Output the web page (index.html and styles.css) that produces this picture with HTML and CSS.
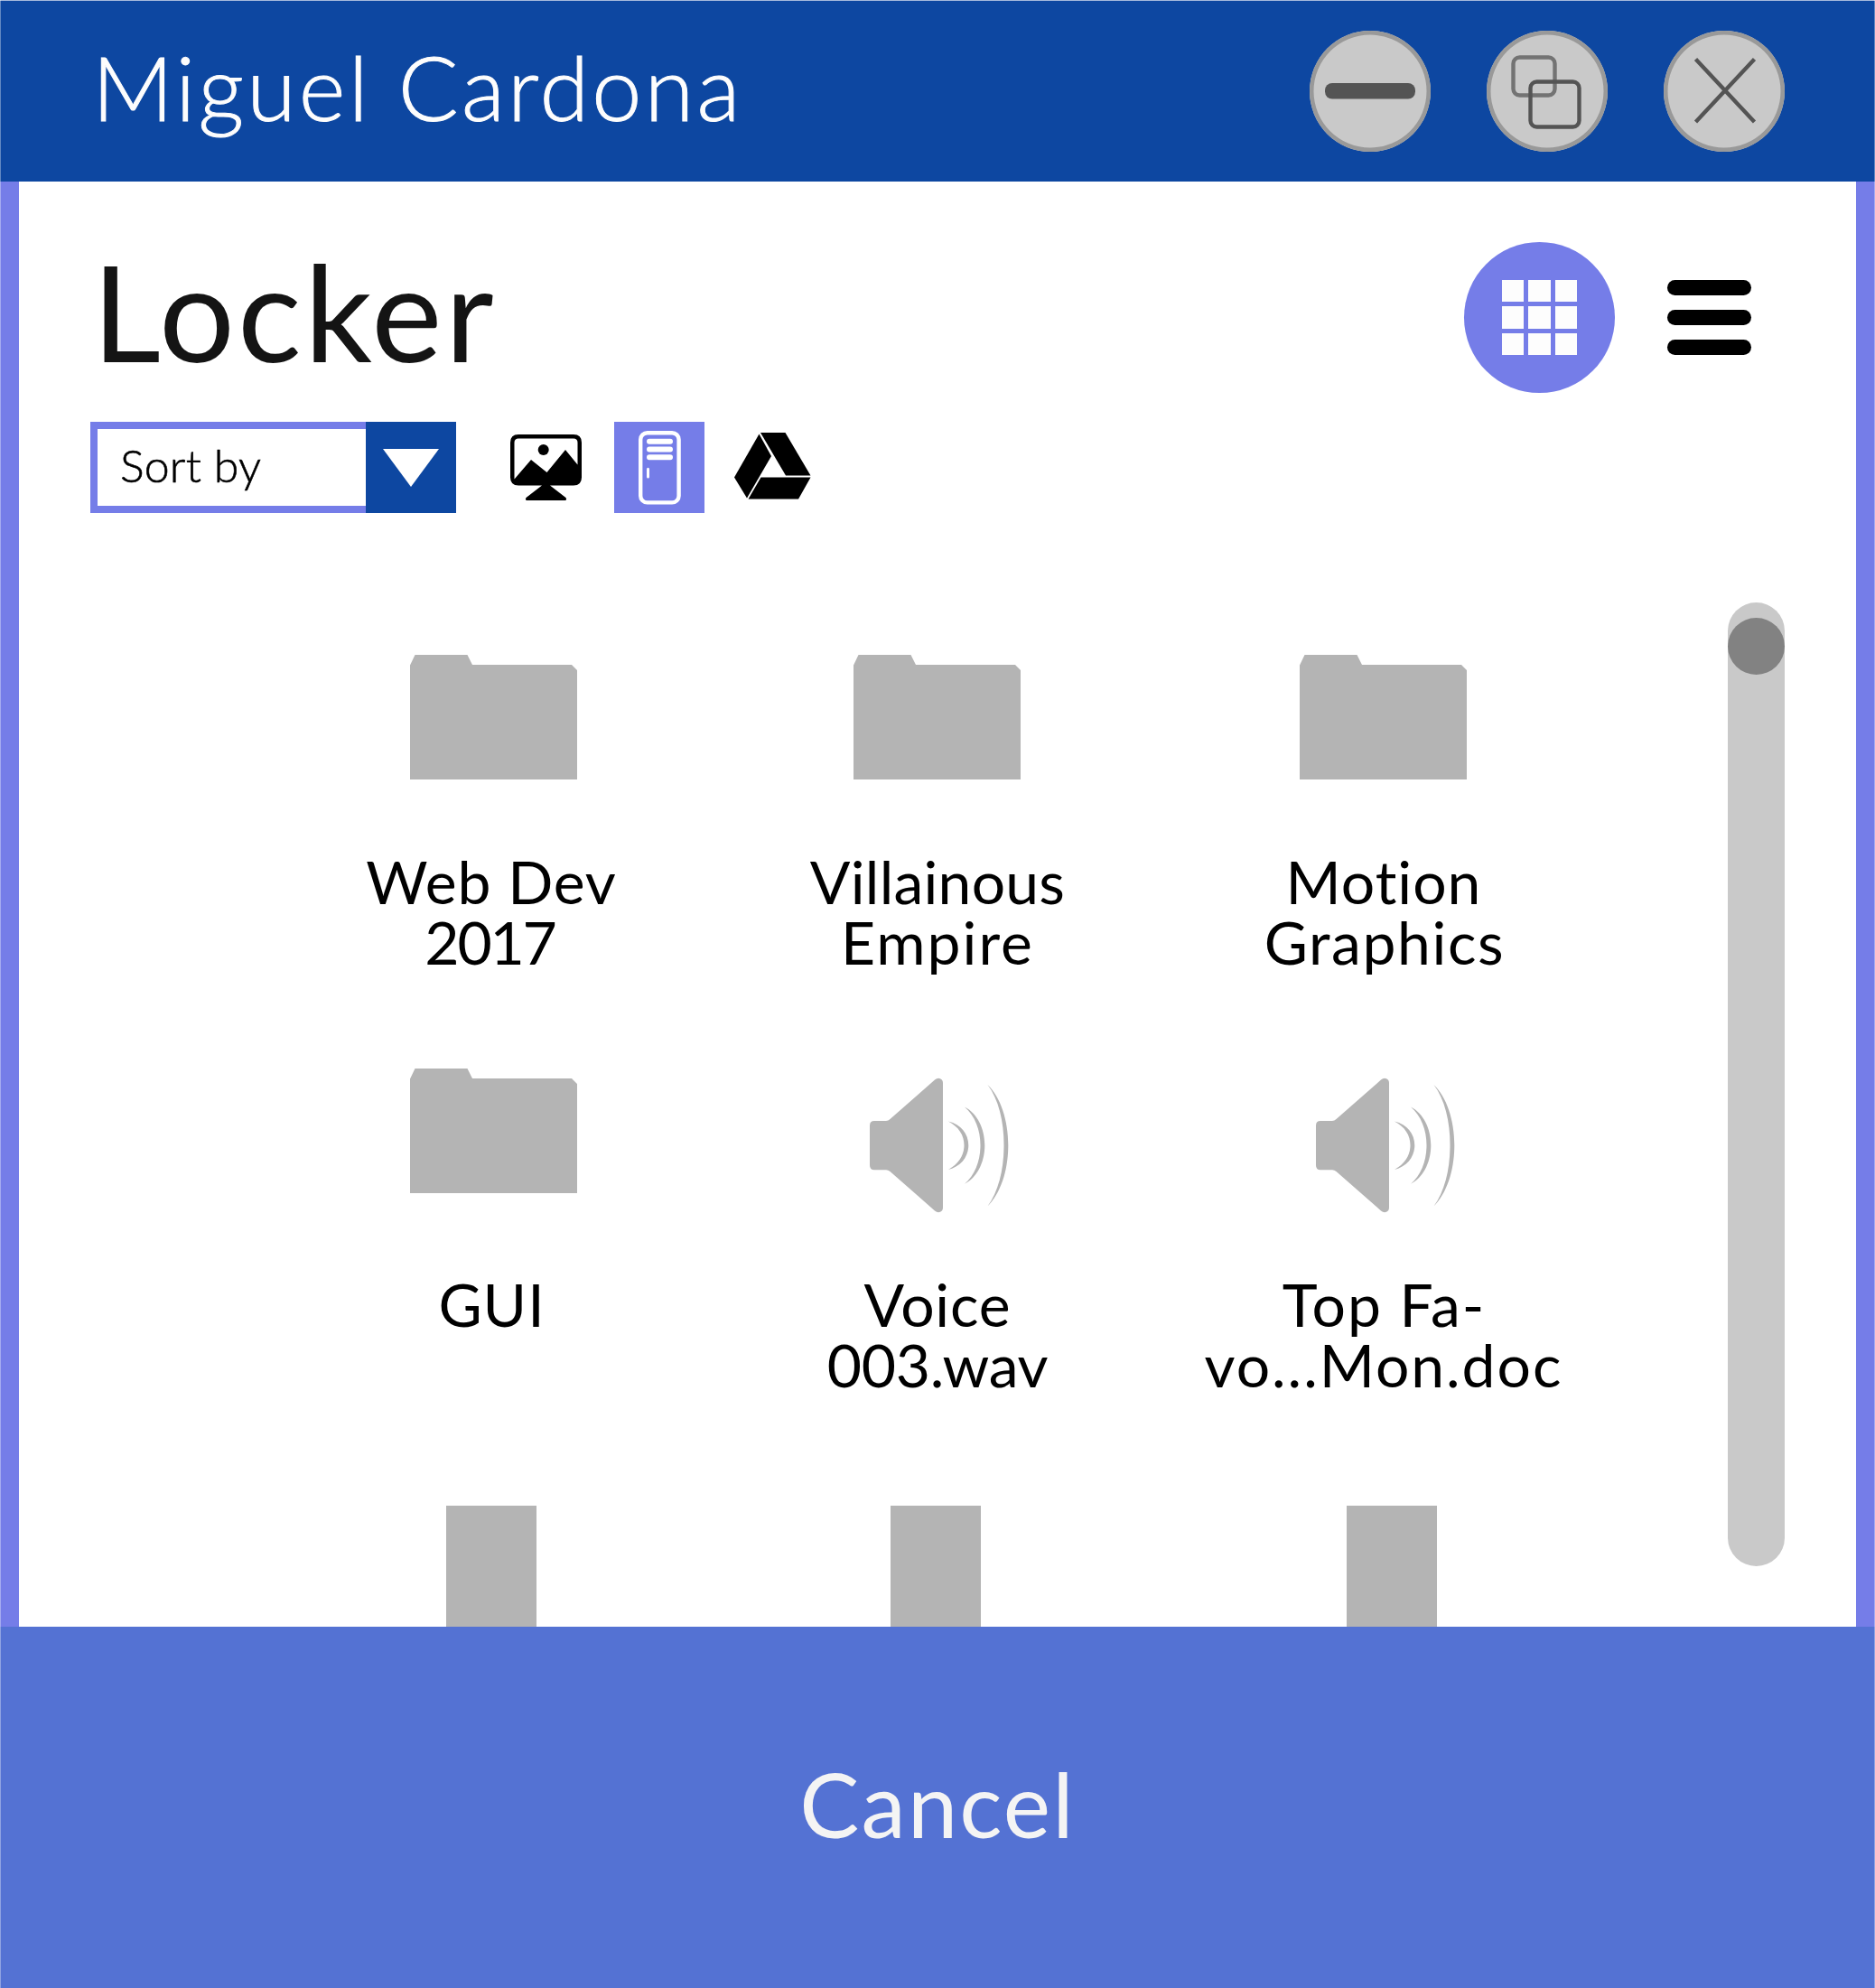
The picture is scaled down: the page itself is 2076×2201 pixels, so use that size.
FILE: index.html
```html
<!DOCTYPE html>
<html lang="en">
<head>
<meta charset="utf-8">
<title>Locker</title>
<link rel="stylesheet" href="styles.css">
</head>
<body>
<svg class="defs" width="0" height="0" aria-hidden="true">
  <symbol id="folder" viewBox="0 0 185 138"><path d="M0 11.500 5.500 0H63.500L69 11H179L185 17V138H0Z"/></symbol>
  <symbol id="speaker" viewBox="0 0 154 150">
    <path d="M5 48H18Q20.500 48 22.500 46L72 2.500Q75 0 78 1.200 81 2.500 81 6V144Q81 147.500 78 148.800 75 150 72 147.500L22.500 104Q20.500 102.300 18 102.300H5Q0 102.300 0 97.300V53Q0 48 5 48Z"/>
    <path d="M87 48.500C101 51.500 109.300 62.500 109.300 75S101 98.500 87 102C98.500 95.500 104.500 86 104.500 75S98.500 54.500 87 48.500Z"/>
    <path d="M105 32.500C119 39.500 127.300 56.500 127.300 75S119 110.500 105 117.700C116.500 108 122.500 92 122.500 75S116.500 42.500 105 32.500Z"/>
    <path d="M130.500 8C145 22 153.300 47.500 153.300 75S145 128 130.500 142.500C142.500 126 148.500 102 148.500 75S142.500 24 130.500 8Z"/>
  </symbol>
</svg>

<div class="window">
  <header class="titlebar">
    <h1 class="user">Miguel Cardona</h1>
    <div class="controls">
      <button class="control" aria-label="Minimize">
        <svg viewBox="0 0 134 134"><rect x="17" y="58" width="100" height="17.500" rx="8" fill="#545454"/></svg>
      </button>
      <button class="control" aria-label="Restore">
        <svg viewBox="0 0 134 134" fill="none" stroke-width="4.400">
          <rect x="29.500" y="29.500" width="46" height="42" rx="7" stroke="#737373"/>
          <rect x="48.500" y="56.500" width="54" height="50" rx="7" stroke="#545454"/>
        </svg>
      </button>
      <button class="control" aria-label="Close">
        <svg viewBox="0 0 134 134"><path d="M35.500 31.500 100.500 101M100.500 31.500 35.500 101" stroke="#545454" stroke-width="4.400"/></svg>
      </button>
    </div>
  </header>

  <main class="content">
    <div class="heading">
      <h2 class="page-title">Locker</h2>
      <div class="views">
        <button class="view-grid" aria-label="Grid view"><i></i><i></i><i></i><i></i><i></i><i></i><i></i><i></i><i></i></button>
        <button class="view-list" aria-label="List view"><i></i><i></i><i></i></button>
      </div>
    </div>

    <div class="toolbar">
      <div class="sort">
        <span class="sort-label">Sort by</span>
        <span class="sort-arrow"><svg width="62" height="42" viewBox="0 0 62 42"><path d="M0 0H62L31 42Z" fill="#fff"/></svg></span>
      </div>
      <button class="source" aria-label="Desktop">
        <svg width="79" height="73" viewBox="0 0 79 73">
          <path fill-rule="evenodd" d="M9 0H70Q79 0 79 9V47.500Q79 56.500 70 56.500H44L61.500 70Q63 73 60.500 73H18.500Q16 73 17.500 70L35 56.500H9Q0 56.500 0 47.500V9Q0 0 9 0ZM9 4.500Q4.500 4.500 4.500 9V49.500L23 28 40.500 42 61 17 74.500 33.500V9Q74.500 4.500 70 4.500Z"/>
          <circle cx="36.700" cy="17" r="6"/>
        </svg>
      </button>
      <button class="source active" aria-label="Locker">
        <svg width="47" height="82" viewBox="0 0 47 82" fill="none" stroke="#fff" stroke-linecap="round">
          <rect x="2.200" y="2.200" width="42.400" height="77.200" rx="7.500" stroke-width="4.400"/>
          <path d="M12 11.700H35M12 20.500H35M12 29.200H35" stroke-width="6"/>
          <path d="M10.500 42.200V51" stroke-width="3"/>
        </svg>
      </button>
      <button class="source" aria-label="Drive">
        <svg width="85" height="74" viewBox="0 0 85 74">
          <path d="M27.500 1.500 41 26 14 72.500 0 49.500Z"/>
          <path d="M29 0H56.500L84.500 47.500H57Z"/>
          <path d="M29.500 49.500H84.500L71 73.500H15.500Z"/>
        </svg>
      </button>
    </div>

    <div class="browser">
      <div class="files">
        <figure class="file"><svg class="folder nudge"><use href="#folder"/></svg><figcaption><span class="t1">Web Dev</span><span class="t2">2017</span></figcaption></figure>
        <figure class="file"><svg class="folder"><use href="#folder"/></svg><figcaption><span class="t3">Villainous</span><span class="t4">Empire</span></figcaption></figure>
        <figure class="file"><svg class="folder"><use href="#folder"/></svg><figcaption><span class="t5">Motion</span><span class="t6">Graphics</span></figcaption></figure>
        <figure class="file second"><svg class="folder nudge"><use href="#folder"/></svg><figcaption><span class="t7">GUI</span></figcaption></figure>
        <figure class="file second"><svg class="speaker"><use href="#speaker"/></svg><figcaption><span class="t8">Voice</span><span class="t9">003.wav</span></figcaption></figure>
        <figure class="file second"><svg class="speaker"><use href="#speaker"/></svg><figcaption><span class="t10">Top Fa-</span><span class="t11">vo...Mon.doc</span></figcaption></figure>
        <figure class="file"><div class="document"></div></figure>
        <figure class="file"><div class="document mid"></div></figure>
        <figure class="file"><div class="document last"></div></figure>
      </div>
      <div class="scrollbar"><div class="thumb"></div></div>
    </div>
  </main>

  <footer class="footer"><button class="cancel">Cancel</button></footer>
</div>
</body>
</html>
```

FILE: styles.css
```css
* { box-sizing: border-box; }
body, h1, h2, figure { margin: 0; }
body { font-family: Lato, "Open Sans", sans-serif; background: #fff; color: #000; }
button { padding: 0; border: 0; background: none; font: inherit; color: inherit; }
svg { display: block; flex: none; }
.defs { position: absolute; }

.window { position: relative; width: 2076px; height: 2201px; display: flex; flex-direction: column; overflow: hidden; }
/* Soft highlight along the window's side edges */
.window::after { content: ""; position: absolute; inset: 0; border: solid rgba(255, 255, 255, .35); border-width: 0 1px; pointer-events: none; }

/* Title bar */
.titlebar { height: 201px; flex: none; background: #0d47a1; border-top: 1px solid #a5b9dc; display: flex; justify-content: space-between; padding: 0 100px 0 102px; }
.user { font-size: 99px; font-weight: 300; line-height: 190px; letter-spacing: 3.200px; color: #fdfdfd; -webkit-text-stroke: 1px #fdfdfd; }
.controls { display: flex; gap: 62px; padding-top: 33px; }
.control { width: 134px; height: 134px; border-radius: 50%; background: #c9c9c9; box-shadow: inset 0 0 0 4.500px #999; }

/* Page heading */
.content { height: 1600px; flex: none; border: solid #757de8; border-width: 0 21px; padding: 66px 0 0 79px; display: flex; flex-direction: column; overflow: hidden; }
.heading { height: 168px; display: flex; justify-content: space-between; align-items: flex-start; padding-right: 116px; }
.page-title { margin-left: 2px; font-size: 148px; font-weight: 400; line-height: 155px; letter-spacing: 3.300px; color: #141414; }
.views { display: flex; align-items: center; gap: 58px; padding-top: 1px; }
.view-grid { width: 167px; height: 167px; border-radius: 50%; background: #757de8; display: grid; grid-template-columns: repeat(3, 24.500px); grid-auto-rows: 24.500px; gap: 5.200px; place-content: center; }
.view-grid i { background: #fdfdfd; }
.view-list { width: 93px; display: grid; gap: 16px; }
.view-list i { height: 17.300px; border-radius: 9px; background: #000; }

/* Sort and source switcher */
.toolbar { height: 101px; margin-top: 32px; display: flex; }
.sort { width: 405px; height: 101px; display: flex; }
.sort-label { flex: 1; border: 8.500px solid #757de8; border-right: 0; padding-left: 25px; font-size: 50px; font-weight: 300; line-height: 81px; letter-spacing: .2px; -webkit-text-stroke: .6px #000; }
.sort-arrow { width: 100px; background: #0d47a1; display: grid; place-items: center; }
.source { width: 100px; height: 101px; margin-left: 25px; display: grid; place-items: center; }
.source:first-of-type { margin-left: 50px; padding-right: 2px; }
.source:last-of-type { padding-bottom: 3px; }
.source.active { background: #757de8; }

/* File grid */
.browser { height: 1233px; margin-left: -79px; display: flex; justify-content: space-between; padding: 99px 79px 0 276px; }
.files { margin-top: 58px; display: grid; grid-template-columns: repeat(3, 494px); grid-template-rows: 458px 484px 134px; }
.file { display: flex; flex-direction: column; align-items: center; }
.folder { width: 185px; height: 138px; margin: 0 1px 79px 0; fill: #b4b4b4; }
.nudge { margin-left: 6px; }
.second .folder { margin-bottom: 89px; }
.speaker { width: 154px; height: 150px; margin: 10px 0 67px 3px; fill: #b4b4b4; }
.document { width: 100px; height: 134px; background: #b4b4b4; }
.mid { margin-right: 4px; }
.last { margin-left: 18px; }
figcaption { font-size: 66px; line-height: 67px; text-align: center; }
figcaption span { display: block; white-space: nowrap; }
.t1 { letter-spacing: .9px; }
.t2 { letter-spacing: -2.200px; margin-left: -3px; }
.t3 { letter-spacing: .24px; }
.t4 { letter-spacing: 2px; }
.t5 { letter-spacing: 1px; }
.t6 { letter-spacing: 1.600px; margin-left: 2px; }
.t7 { letter-spacing: 1px; margin-left: 1px; }
.t8 { letter-spacing: .8px; }
.t9 { letter-spacing: -.3px; }
.t10 { letter-spacing: 1.900px; margin-left: 1px; }
.t11 { letter-spacing: 1.960px; }

.scrollbar { width: 63px; height: 1067px; border-radius: 32px; background: #c9c9c9; padding-top: 17px; }
.thumb { width: 63px; height: 63px; border-radius: 50%; background: #828282; }

/* Footer */
.footer { height: 400px; flex: none; background: #5472d3; display: flex; }
.cancel { flex: 1; padding-bottom: 10px; font-size: 99px; letter-spacing: 2.150px; color: #f4f4f4; }
```
